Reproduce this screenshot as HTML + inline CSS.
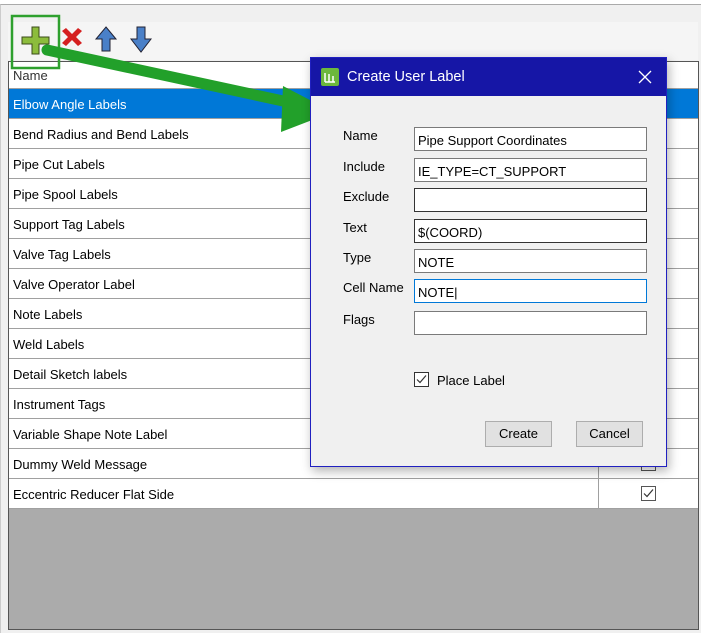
<!DOCTYPE html>
<html><head><meta charset="utf-8"><style>
*{box-sizing:border-box;margin:0;padding:0}
body{width:701px;height:633px;background:#fff;position:relative;overflow:hidden;font-family:"Liberation Sans",sans-serif;font-size:13px;color:#000}
.outer{position:absolute;left:0;top:4px;width:701px;height:629px;background:#f0f0f0;border-top:1px solid #aaa;border-left:1px solid #ccc}
.tb{position:absolute;left:8px;top:22px;width:690px;height:38px;background:#f5f5f5}
.grid{position:absolute;left:8px;top:61px;width:691px;height:569px;background:#ababab;border:1px solid #555}
.row{position:absolute;left:0;width:689px;height:30px;background:#fff;border-bottom:1px solid #a0a0a0}
.row span{position:absolute;left:4px;top:8px;font-size:13px}
.row .c{position:absolute;left:589px;top:0;width:1px;height:30px;background:#a0a0a0}
.sel{background:#0078d7;color:#fff}
.dlg{position:absolute;left:310px;top:57px;width:357px;height:410px;background:#f0f0f0;border:1px solid #2020c0;box-shadow:2px 4px 10px rgba(0,0,0,.3)}
.title{height:38px;background:#1616a6;color:#fff;position:relative}
.title .t{position:absolute;left:36px;top:11px;font-size:14.5px}
.lbl{position:absolute;left:32px;font-size:13px}
.fld{position:absolute;left:103px;width:233px;height:24px;background:#fff;border:1px solid #7a7a7a;font-size:13px;padding:5px 3px}
.btn{position:absolute;width:67px;height:26px;background:#e1e1e1;border:1px solid #adadad;text-align:center;line-height:24px;font-size:13px}
</style></head><body>
<div class="outer"></div>
<div class="tb"></div>
<div class="grid">
<div class="row" style="top:0;height:27px;background:#fff"><span style="top:6px;color:#333">Name</span></div>
<div class="row sel" style="top:27px"><span>Elbow Angle Labels</span></div>
<div class="row" style="top:57px"><span>Bend Radius and Bend Labels</span><i class="c"></i></div>
<div class="row" style="top:87px"><span>Pipe Cut Labels</span><i class="c"></i></div>
<div class="row" style="top:117px"><span>Pipe Spool Labels</span><i class="c"></i></div>
<div class="row" style="top:147px"><span>Support Tag Labels</span><i class="c"></i></div>
<div class="row" style="top:177px"><span>Valve Tag Labels</span><i class="c"></i></div>
<div class="row" style="top:207px"><span>Valve Operator Label</span><i class="c"></i></div>
<div class="row" style="top:237px"><span>Note Labels</span><i class="c"></i></div>
<div class="row" style="top:267px"><span>Weld Labels</span><i class="c"></i></div>
<div class="row" style="top:297px"><span>Detail Sketch labels</span><i class="c"></i></div>
<div class="row" style="top:327px"><span>Instrument Tags</span><i class="c"></i></div>
<div class="row" style="top:357px"><span>Variable Shape Note Label</span><i class="c"></i></div>
<div class="row" style="top:387px"><span>Dummy Weld Message</span><i class="c"></i>
<svg style="position:absolute;left:632px;top:7px" width="15" height="15"><rect x="0.5" y="0.5" width="14" height="14" fill="#fff" stroke="#555"/></svg></div>
<div class="row" style="top:417px"><span>Eccentric Reducer Flat Side</span><i class="c"></i>
<svg style="position:absolute;left:632px;top:7px" width="15" height="15"><rect x="0.5" y="0.5" width="14" height="14" fill="#fff" stroke="#555"/><path d="M3 7.5l3 3 6-7" fill="none" stroke="#333" stroke-width="1.2"/></svg></div>
</div>
<svg style="position:absolute;left:0;top:0" width="701" height="140">
<rect x="12" y="16" width="47" height="52" fill="none" stroke="#2ea02e" stroke-width="2.5"/>
<path d="M32 27h7v10h10v7H39v10h-7V44H22v-7h10z" fill="#8cbc3c" stroke="#3a4a1a" stroke-width="1"/>
<path d="M62 31l4-3 6 6 6-6 4 3-6 6 6 6-4 3-6-6-6 6-4-3 6-6z" fill="#d52020"/>
<path d="M106 27l10 12h-6v12h-8V39h-6z" fill="#4a80c8" stroke="#223" stroke-width="1"/>
<path d="M137 27h8v12h6l-10 13-10-13h6z" fill="#4a80c8" stroke="#223" stroke-width="1"/>
<path d="M47 50L297 104" stroke="#22a02a" stroke-width="11" stroke-linecap="round"/>
<path d="M283 86l50 26-52 20z" fill="#22a02a"/>
</svg>
<div class="dlg">
<div class="title">
<svg style="position:absolute;left:10px;top:10px" width="18" height="18"><rect width="18" height="18" rx="2" fill="#6cb83c"/><path d="M4 14V5M4 14h10M8 14V6M12 14V8" stroke="#fff" stroke-width="1.5"/></svg>
<span class="t">Create User Label</span>
<svg style="position:absolute;left:327px;top:12px" width="14" height="14"><path d="M1 1l12 12M13 1L1 13" stroke="#fff" stroke-width="1.3"/></svg>
</div>
<span class="lbl" style="top:70px">Name</span><div class="fld" style="top:69px">Pipe Support Coordinates</div>
<span class="lbl" style="top:101px">Include</span><div class="fld" style="top:100px">IE_TYPE=CT_SUPPORT</div>
<span class="lbl" style="top:131px">Exclude</span><div class="fld" style="top:130px;border-color:#333"></div>
<span class="lbl" style="top:162px">Text</span><div class="fld" style="top:161px;border-color:#333">$(COORD)</div>
<span class="lbl" style="top:192px">Type</span><div class="fld" style="top:191px">NOTE</div>
<span class="lbl" style="top:222px">Cell Name</span><div class="fld" style="top:221px;border-color:#0078d7">NOTE|</div>
<span class="lbl" style="top:254px">Flags</span><div class="fld" style="top:253px"></div>
<svg style="position:absolute;left:103px;top:314px" width="15" height="15"><rect x="0.5" y="0.5" width="14" height="14" fill="#fff" stroke="#333"/><path d="M3 7.5l3 3 6-7" fill="none" stroke="#333" stroke-width="1.2"/></svg>
<span class="lbl" style="left:126px;top:315px">Place Label</span>
<div class="btn" style="left:174px;top:363px">Create</div>
<div class="btn" style="left:265px;top:363px">Cancel</div>
</div>
</body></html>
